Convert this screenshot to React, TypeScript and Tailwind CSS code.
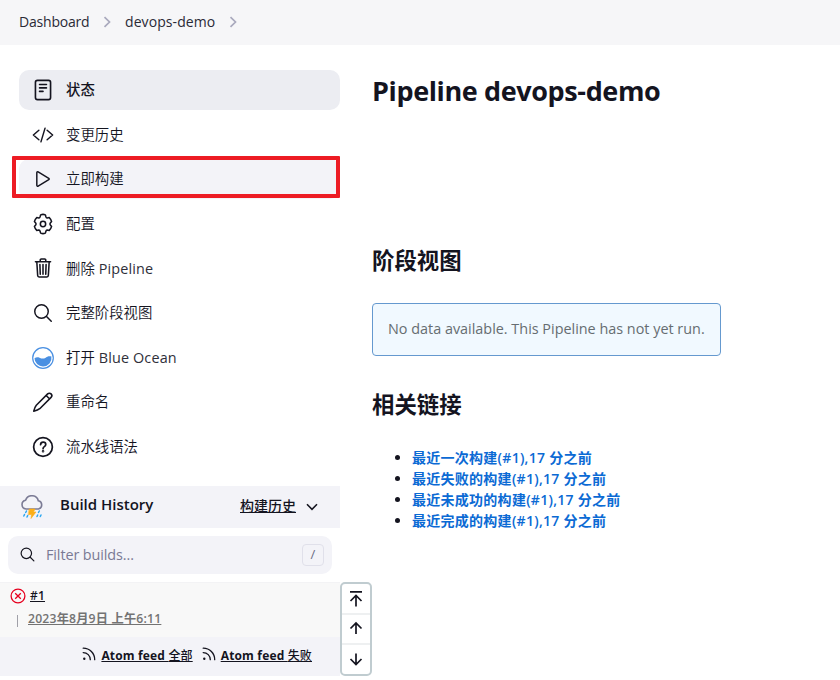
import type { ReactNode } from "react";

type IconProps = { children: ReactNode; size?: string; width?: number };

function Icon({ children, size = "size-[22px]", width = 32 }: IconProps) {
  return (
    <svg viewBox="0 0 512 512" className={`${size} block shrink-0`} fill="none" stroke="currentColor" strokeWidth={width} strokeLinecap="round" strokeLinejoin="round">
      {children}
    </svg>
  );
}

const search = (
  <>
    <path d="M221 64a157 157 0 10157 157A157 157 0 00221 64z" />
    <path d="M338 338l110 110" />
  </>
);

type Item = { label: string; latin?: string; icon: ReactNode; tone?: string; weight?: string };

const items: Item[] = [
  {
    label: "状态",
    tone: "bg-[#ecedf2]",
    weight: "font-medium",
    icon: (
      <Icon width={38}>
        <rect x="80" y="32" width="352" height="448" rx="48" />
        <path d="M176 128h160M176 208h160M176 288h80" />
      </Icon>
    ),
  },
  {
    label: "变更历史",
    icon: (
      <Icon width={34}>
        <path d="M160 368L32 256l128-112M352 368l128-112-128-112M304 96l-96 320" />
      </Icon>
    ),
  },
  {
    label: "立即构建",
    tone: "bg-[#f3f3f8]",
    icon: (
      <Icon width={34}>
        <path d="M112 111v290c0 17.440 17 28.520 31 20.160l247.900-148.370c12.120-7.250 12.120-26.330 0-33.580L143 90.840c-14-8.360-31 2.720-31 20.160z" />
      </Icon>
    ),
  },
  {
    label: "配置",
    icon: (
      <Icon width={36}>
        <path d="M201 43q55-22 110 0l15 50q7 17 27 25l48-12q40 36 55 94l-34 39q-7 17 0 34l34 39q-15 58-55 94l-48-12q-20 8-27 25l-15 50q-55 22-110 0l-15-50q-7-17-27-25l-48 12q-40-36-55-94l34-39q7-17 0-34l-34-39q15-58 55-94l48 12q20-8 27-25z" />
        <circle cx="256" cy="256" r="62" />
      </Icon>
    ),
  },
  {
    label: "删除",
    latin: " Pipeline",
    icon: (
      <Icon width={36}>
        <path d="M112 112l20 320c.95 18.490 14.400 32 32 32h184c17.670 0 30.870-13.510 32-32l20-320M80 112h352M192 112V72h0a23.930 23.930 0 0124-24h80a23.930 23.930 0 0124 24h0v40M256 176v224M184 176l8 224M328 176l-8 224" />
      </Icon>
    ),
  },
  { label: "完整阶段视图", icon: <Icon width={34}>{search}</Icon> },
  {
    label: "打开",
    latin: " Blue Ocean",
    icon: (
      <svg viewBox="0 0 22 22" className="block size-[22px] shrink-0">
        <circle cx="11" cy="11" r="10.300" fill="#fff" stroke="#4a90e2" strokeWidth="1.200" />
        <path d="M2.500 11.200c1.600-1 3.200-1.200 5-.5 2 .8 3.600 1.500 5.800.2 1.800-1.100 3.500-2 6.100-1.300A8.500 8.500 0 0 1 11 19.500 8.500 8.500 0 0 1 2.500 11.200z" fill="#4a90e2" />
      </svg>
    ),
  },
  {
    label: "重命名",
    icon: (
      <Icon width={36}>
        <path d="M364 68L100 332Q64 374 40 472Q138 448 180 412L444 148a56.500 56.500 0 00-80-80zM330 106l76 76" />
      </Icon>
    ),
  },
  {
    label: "流水线语法",
    icon: (
      <Icon width={40}>
        <circle cx="256" cy="256" r="218" />
        <path d="M200 202c2-38 26-58 60-58 36 0 60 22 60 54 0 48-62 48-62 90v8" />
        <circle cx="257" cy="356" r="10" />
      </Icon>
    ),
  },
];

const links = [
  "最近一次构建(#1),17 分之前",
  "最近失败的构建(#1),17 分之前",
  "最近未成功的构建(#1),17 分之前",
  "最近完成的构建(#1),17 分之前",
];

function Crumb({ children, className, text }: { children: string; className: string; text: string }) {
  return (
    <span className={`flex items-center ${className}`}>
      <span className={`-mt-0.5 whitespace-nowrap ${text}`}>{children}</span>
      <svg viewBox="0 0 8 12" className="-mt-px ml-auto h-3 w-2" fill="none" stroke="#a9a9bd" strokeWidth="1.700">
        <path d="M1.500 1.200L6.500 6l-5 4.800" />
      </svg>
    </span>
  );
}

function Feed({ label }: { label: string }) {
  return (
    <span className="flex items-center gap-[5px] whitespace-nowrap">
      <svg viewBox="0 0 14 14" className="-mt-[3px] size-3.5" fill="none" stroke="currentColor" strokeWidth="1.300" strokeLinecap="round">
        <path d="M1.200 1.200c6.500 0 11.500 5 11.500 11.500M1.200 5.600c4 0 7.100 3.100 7.100 7.100" />
        <circle cx="2.300" cy="11.700" r="1.200" fill="currentColor" stroke="none" />
      </svg>
      <a className="tracking-[.16px] underline">
        <span className="font-bold">Atom feed </span>
        <span className="font-medium">{label}</span>
      </a>
    </span>
  );
}

function Arrow({ d }: { d: string }) {
  return (
    <span className="flex flex-1 items-center justify-center">
      <svg viewBox="0 0 14 18" className="h-[18px] w-3.5" fill="none" stroke="currentColor" strokeWidth="1.700">
        <path d={d} />
      </svg>
    </span>
  );
}

export default function App() {
  return (
    <div className="h-[680px] w-[840px] overflow-hidden bg-white font-['Open_Sans','Noto_Sans_CJK_SC',sans-serif] text-[14.400px] text-[#14141f]">
      <header className="flex h-[45px] items-center bg-[#f6f6f8] pl-[19px] text-[14px] text-[#2a2a36]">
        <Crumb className="w-[92px]" text="tracking-[-.2px]">Dashboard</Crumb>
        <Crumb className="ml-3.5 w-[112px]" text="tracking-[.08px]">devops-demo</Crumb>
      </header>
      <div className="flex">
        <aside className="w-[340px] shrink-0">
          <nav className="relative ml-[19px] flex h-[441px] flex-col gap-[4.600px] pt-[25px]">
            {items.map((item) => (
              <a key={item.label} className={`flex h-10 shrink-0 items-center gap-[12px] rounded-[10px] pl-[13px] ${item.tone ?? ""}`}>
                {item.icon}
                <span className="whitespace-pre">
                  <span className={item.weight ?? "font-[350]"}>{item.label}</span>
                  {item.latin && <span className="tracking-[.15px] text-[#2f2f3a]">{item.latin}</span>}
                </span>
              </a>
            ))}
            <span className="absolute -left-[7px] top-[111px] h-[42px] w-[328px] rounded-[1px] border-4 border-[#ed1c24]" />
          </nav>

          <section className="flex h-[190px] flex-col">
            <div className="flex h-[42px] shrink-0 items-center bg-[#f3f3f8] pl-5 pr-[22px]">
              <svg viewBox="0 0 24 24" className="size-6" fill="none" strokeLinecap="round" strokeLinejoin="round">
                <path d="M6 14a4.400 4.400 0 01-.4-8.700A6.600 6.600 0 0118.300 5.800a4.200 4.200 0 01.2 8.200z" stroke="#7b7b95" strokeWidth="1.600" />
                <path d="M9.500 14h5.500l-1.500 3h2.500l-5 6.500.5-4H8.500z" fill="#fcaf17" stroke="#fcaf17" strokeWidth=".6" />
                <path d="M6.500 16l-.8 1.500M4.500 19.500l-.7 1.500M7.700 20.500l-.7 1.500M19.300 16l-.8 1.500M17.700 20l-.7 1.500M21 20l-.7 1.500" stroke="#2da7f0" strokeWidth="1.500" />
              </svg>
              <h2 className="ml-4 -mt-[5px] whitespace-nowrap text-[15px] font-semibold">Build History</h2>
              <a className="ml-auto -mt-1 text-[14px] font-medium underline">构建历史</a>
              <svg viewBox="0 0 12 8" className="ml-2.5 h-2 w-3" fill="none" stroke="currentColor" strokeWidth="1.600">
                <path d="M1 1.300l5 5 5-5" />
              </svg>
            </div>
            <div className="mx-2 mt-2 flex h-[38px] shrink-0 items-center rounded-[10px] bg-[#f3f3f8] pl-[11px] pr-2">
              <Icon size="-mt-0.5 size-[17px]" width={36}>{search}</Icon>
              <span className="ml-2.5 whitespace-nowrap tracking-[-.1px] text-[#7a7a94]">Filter builds...</span>
              <kbd className="ml-auto flex size-[22px] items-center justify-center rounded-[4px] border border-[#e0e0ea] font-['Open_Sans',sans-serif] text-[13px] text-[#6a6a84]">/</kbd>
            </div>
            <div className="mt-2 h-[55px] shrink-0 border-t border-[#f3f3f5] bg-[#f8f8f8] pl-2.5 pt-1 text-[12px] font-semibold">
              <div className="flex h-[17px] items-center gap-1">
                <svg viewBox="0 0 16 16" className="size-4" fill="none" stroke="#e6001f" strokeWidth="1.300">
                  <circle cx="8" cy="8" r="6.900" />
                  <path d="M5.200 5.200l5.600 5.600M10.800 5.200l-5.600 5.600" />
                </svg>
                <a className="tracking-[.2px] underline">#1</a>
              </div>
              <div className="mt-[7px] flex h-[17px] items-center pl-[7px] text-[#737373]">
                <span className="mt-0.5 h-3 w-px bg-[#a0a0a8]" />
                <a className="ml-2.5 whitespace-nowrap text-[12.200px] tracking-[.2px] underline">2023年8月9日 上午6:11</a>
              </div>
            </div>
            <div className="flex h-[39px] shrink-0 items-center justify-end gap-[9px] bg-[#f3f3f8] pr-7 pb-0.5 text-[12px]">
              <Feed label="全部" />
              <Feed label="失败" />
            </div>
          </section>
        </aside>

        <div className="flex w-8 shrink-0 items-end">
          <div className="flex h-[94px] w-8 flex-col divide-y-2 divide-[#eef0f1] rounded-[5px] border-2 border-[#c0ccd0] bg-white">
            <Arrow d="M1 2.800h12M7 17.500V6.500M1.500 12L7 6.500l5.500 5.500" />
            <Arrow d="M7 14V3M1.500 8.500L7 3l5.500 5.500" />
            <Arrow d="M7 2.500v11M1.500 8L7 13.500 12.500 8" />
          </div>
        </div>

        <main>
          <h1 className="mt-[27px] whitespace-nowrap text-[27px] leading-[38px] font-bold tracking-[-.38px]">Pipeline devops-demo</h1>
          <h2 className="mt-[135px] text-[22.400px] leading-[32px] font-bold">阶段视图</h2>
          <p className="mt-[26px] flex h-[53px] w-[349px] items-center rounded-[4px] border border-[#6599cf] bg-[#f1f9ff] pb-0.5 pl-[15px] whitespace-nowrap text-[#666d71]">
            No data available. This Pipeline has not yet run.
          </p>
          <h2 className="mt-[33px] text-[22.400px] leading-[32px] font-bold">相关链接</h2>
          <ul className="mt-[26px] list-disc pl-10 leading-[21px]">
            {links.map((link) => (
              <li key={link} className="h-[21px]">
                <a className="whitespace-nowrap text-[14px] font-semibold tracking-[.27px] text-[#0b6ad4]">{link}</a>
              </li>
            ))}
          </ul>
        </main>
      </div>
    </div>
  );
}
